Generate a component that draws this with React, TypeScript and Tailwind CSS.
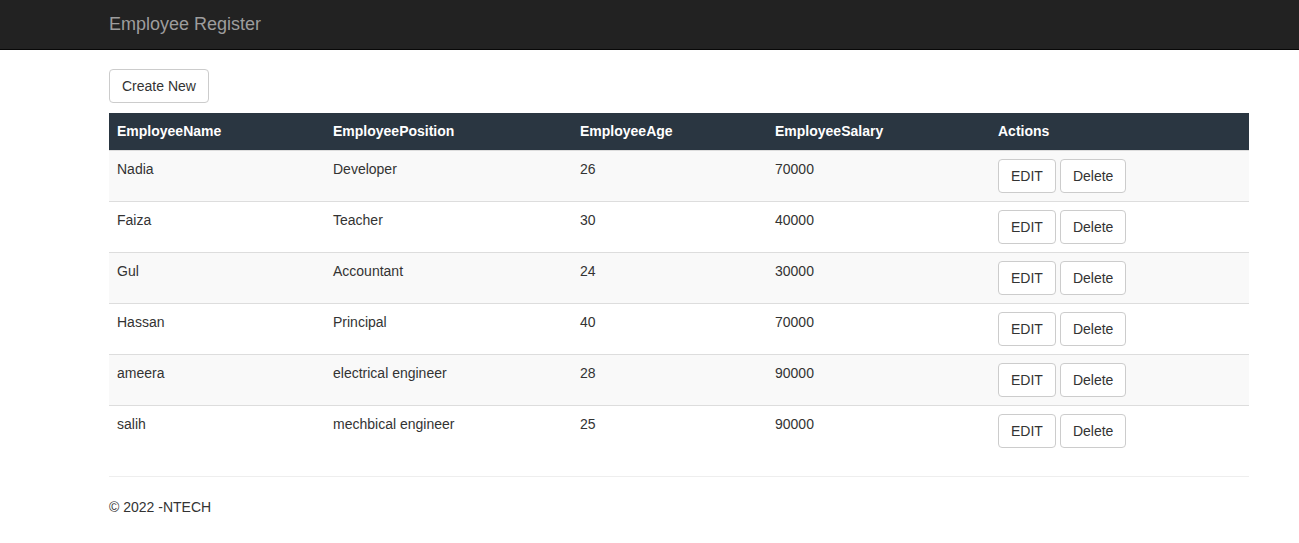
const employees = [
  { name: "Nadia", position: "Developer", age: 26, salary: 70000 },
  { name: "Faiza", position: "Teacher", age: 30, salary: 40000 },
  { name: "Gul", position: "Accountant", age: 24, salary: 30000 },
  { name: "Hassan", position: "Principal", age: 40, salary: 70000 },
  { name: "ameera", position: "electrical engineer", age: 28, salary: 90000 },
  { name: "salih", position: "mechbical engineer", age: 25, salary: 90000 },
];

const btn =
  "inline-block h-[34px] px-3 rounded-[4px] border border-[#ccc] bg-white text-[14px] leading-[20px] text-[#333]";

export default function App() {
  return (
    <div className="min-h-screen bg-white text-[14px] leading-[20px] text-[#333] font-['Liberation_Sans',Arial,sans-serif]">
      <nav className="h-[50px] bg-[#222] border-b border-[#080808]">
        <div className="pl-[109px] h-[48px] flex items-center">
          <span className="text-[18px] leading-[20px] text-[#9d9d9d]">Employee Register</span>
        </div>
      </nav>

      <div className="ml-[109px] w-[1140px]">
        <p className="pt-[19px] mb-[10px]">
          <button className={btn}>Create New</button>
        </p>

        <table className="w-full border-collapse">
          <thead>
            <tr className="bg-[#2a3641] text-white">
              <th className="w-[216px] px-2 pt-2 pb-[9px] text-left font-bold">EmployeeName</th>
              <th className="w-[247px] px-2 pt-2 pb-[9px] text-left font-bold">EmployeePosition</th>
              <th className="w-[195px] px-2 pt-2 pb-[9px] text-left font-bold">EmployeeAge</th>
              <th className="w-[223px] px-2 pt-2 pb-[9px] text-left font-bold">EmployeeSalary</th>
              <th className="px-2 pt-2 pb-[9px] text-left font-bold">Actions</th>
            </tr>
          </thead>
          <tbody>
            {employees.map((e, i) => (
              <tr key={e.name} className={i % 2 === 0 ? "bg-[#f9f9f9]" : "bg-white"}>
                <td className="p-2 align-top border-t border-[#ddd]">{e.name}</td>
                <td className="p-2 align-top border-t border-[#ddd]">{e.position}</td>
                <td className="p-2 align-top border-t border-[#ddd]">{e.age}</td>
                <td className="p-2 align-top border-t border-[#ddd]">{e.salary}</td>
                <td className="p-2 align-top border-t border-[#ddd]">
                  <div className="flex gap-1">
                    <button className={btn}>EDIT</button>
                    <button className={btn}>Delete</button>
                  </div>
                </td>
              </tr>
            ))}
          </tbody>
        </table>

        <hr className="mt-5 mb-5 border-t border-[#eee]" />
        <footer>
          <p>© 2022 -NTECH</p>
        </footer>
      </div>
    </div>
  );
}
